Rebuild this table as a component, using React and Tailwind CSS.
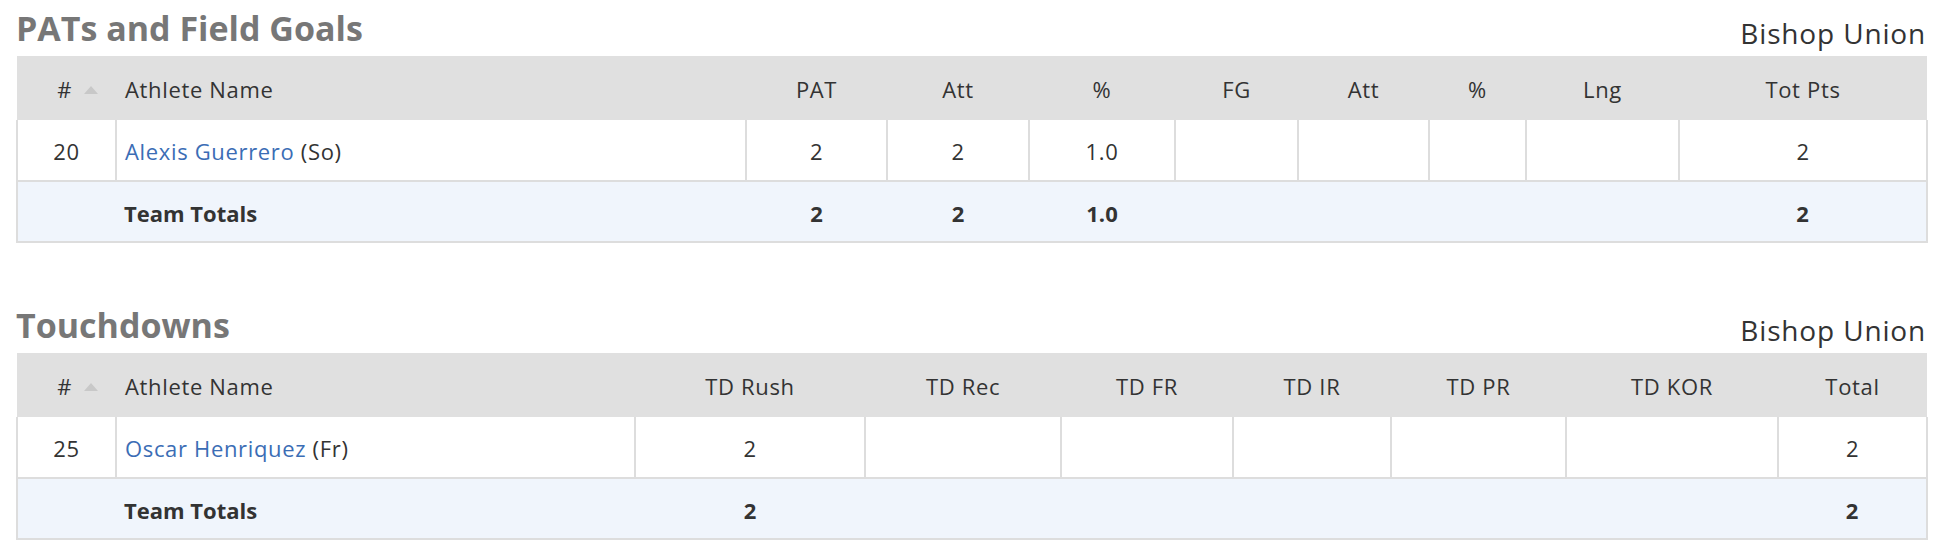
import React from "react";

const patCols = [
  { label: "PAT", w: "w-[141px]" },
  { label: "Att", w: "w-[142px]" },
  { label: "%", w: "w-[146px]" },
  { label: "FG", w: "w-[123px]" },
  { label: "Att", w: "w-[131px]" },
  { label: "%", w: "w-[97px]" },
  { label: "Lng", w: "w-[153px]" },
  { label: "Tot Pts", w: "w-[248px]" },
];

const tdCols = [
  { label: "TD Rush", w: "w-[230px]" },
  { label: "TD Rec", w: "w-[196px]" },
  { label: "TD FR", w: "w-[172px]" },
  { label: "TD IR", w: "w-[158px]" },
  { label: "TD PR", w: "w-[175px]" },
  { label: "TD KOR", w: "w-[212px]" },
  { label: "Total", w: "w-[149px]" },
];

const sections = [
  {
    title: "PATs and Field Goals",
    nameW: "w-[630px]",
    cols: patCols,
    rows: [{ num: "20", name: "Alexis Guerrero", yr: "So", vals: ["2", "2", "1.0", "", "", "", "", "2"] }],
    totals: ["2", "2", "1.0", "", "", "", "", "2"],
  },
  {
    title: "Touchdowns",
    nameW: "w-[519px]",
    cols: tdCols,
    rows: [{ num: "25", name: "Oscar Henriquez", yr: "Fr", vals: ["2", "", "", "", "", "", "2"] }],
    totals: ["2", "", "", "", "", "", "2"],
  },
];

function SortArrow() {
  return (
    <svg width="14" height="8" viewBox="0 0 14 8" className="ml-[12px]">
      <path d="M7 0 L14 8 L0 8 Z" fill="#c8c8c8" />
    </svg>
  );
}

function StatTable({ section }) {
  return (
    <div>
      <div className="flex h-[56px] items-end justify-between">
        <h2 className="pb-[8px] text-[34px] font-bold leading-[40px] text-[#777777]">
          {section.title}
        </h2>
        <span className="pb-[7px] text-[28px] leading-[32px] tracking-[0.03em] text-[#333333]">Bishop Union</span>
      </div>
      <table className="w-[1910px] table-fixed border-collapse text-[22px] tracking-[0.03em] text-[#333333]">
        <colgroup>
          <col className="w-[99px]" />
          <col className={section.nameW} />
          {section.cols.map((c, i) => (
            <col key={i} className={c.w} />
          ))}
        </colgroup>
        <thead>
          <tr className="h-[64px] bg-[#e0e0e0]">
            <th className="pt-[3px] font-normal">
              <div className="flex items-center justify-end pr-[18px]">
                <span>#</span>
                <SortArrow />
              </div>
            </th>
            <th className="pl-[9px] pt-[3px] text-left font-normal">Athlete Name</th>
            {section.cols.map((c, i) => (
              <th key={i} className="pt-[3px] text-center font-normal">
                {c.label}
              </th>
            ))}
          </tr>
        </thead>
        <tbody>
          {section.rows.map((r) => (
            <tr key={r.num} className="h-[61px] bg-white">
              <td className="border-2 border-t-0 border-[#dddddd] pt-[3px] text-center">{r.num}</td>
              <td className="border-2 border-t-0 border-[#dddddd] pl-[8px] pt-[3px]">
                <a href="#" className="text-[#3b6db5]">
                  {r.name}
                </a>{" "}
                ({r.yr})
              </td>
              {r.vals.map((v, i) => (
                <td key={i} className="border-2 border-t-0 border-[#dddddd] pt-[3px] text-center">
                  {v}
                </td>
              ))}
            </tr>
          ))}
          <tr className="h-[61px] border-2 border-[#dddddd] bg-[#f0f5fc] font-bold tracking-normal">
            <td></td>
            <td className="pl-[8px] pt-[3px]">Team Totals</td>
            {section.totals.map((v, i) => (
              <td key={i} className="pt-[3px] text-center">
                {v}
              </td>
            ))}
          </tr>
        </tbody>
      </table>
    </div>
  );
}

export default function App() {
  return (
    <div className="flex flex-col gap-[54px] bg-white pl-[16px] pr-[20px]" style={{ fontFamily: '"Open Sans", "Noto Sans", sans-serif' }}>
      {sections.map((s) => (
        <StatTable key={s.title} section={s} />
      ))}
    </div>
  );
}
